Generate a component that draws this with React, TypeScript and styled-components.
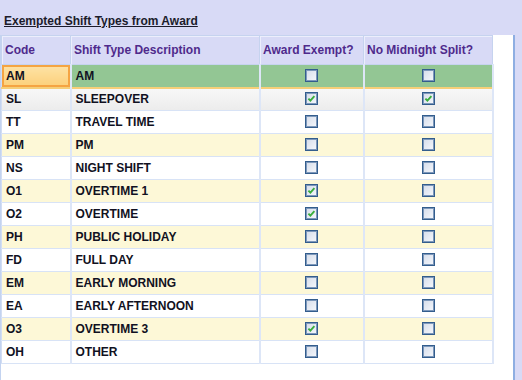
import React from 'react';
import styled, { createGlobalStyle } from 'styled-components';

type Row = { code: string; desc: string; exempt: boolean; split: boolean };

const ROWS: Row[] = [
  { code: 'AM', desc: 'AM', exempt: false, split: false },
  { code: 'SL', desc: 'SLEEPOVER', exempt: true, split: true },
  { code: 'TT', desc: 'TRAVEL TIME', exempt: false, split: false },
  { code: 'PM', desc: 'PM', exempt: false, split: false },
  { code: 'NS', desc: 'NIGHT SHIFT', exempt: false, split: false },
  { code: 'O1', desc: 'OVERTIME 1', exempt: true, split: false },
  { code: 'O2', desc: 'OVERTIME', exempt: true, split: false },
  { code: 'PH', desc: 'PUBLIC HOLIDAY', exempt: false, split: false },
  { code: 'FD', desc: 'FULL DAY', exempt: false, split: false },
  { code: 'EM', desc: 'EARLY MORNING', exempt: false, split: false },
  { code: 'EA', desc: 'EARLY AFTERNOON', exempt: false, split: false },
  { code: 'O3', desc: 'OVERTIME 3', exempt: true, split: false },
  { code: 'OH', desc: 'OTHER', exempt: false, split: false },
];

type RowState = 'selected' | 'hover' | 'odd' | 'even';

const GlobalStyle = createGlobalStyle`
  html, body { margin: 0; padding: 0; }
  body {
    background: #d8daf6;
    font-family: "Liberation Sans", Arial, sans-serif;
    font-size: 12px;
  }
`;

const Panel = styled.div`
  width: 522px;
  height: 380px;
  display: flex;
  flex-direction: column;
  overflow: hidden;
`;

const TitleBar = styled.div`
  height: 35px;
  box-sizing: border-box;
  padding: 14px 0 0 4px;
`;

const Title = styled.span`
  font-weight: bold;
  font-size: 12px;
  color: #1c1c2c;
  text-decoration: underline;
`;

const Content = styled.div`
  width: 515px;
  flex: 1;
  box-sizing: border-box;
  background: #ffffff;
  border-left: 1px solid #c3d3f0;
  border-right: 2px solid #8eaee2;
`;

const Grid = styled.table`
  border-collapse: collapse;
  table-layout: fixed;
  width: 491px;
  border: 1px solid #d2ddf3;
`;

const HeadCell = styled.th`
  height: 29px;
  padding: 0 0 0 3px;
  box-sizing: border-box;
  background: #d8daf6;
  border: 1px solid #c6d3ef;
  box-shadow: inset 1px 1px 0 #eceefc;
  color: #4f2a8c;
  font-weight: bold;
  font-size: 12px;
  text-align: left;
  white-space: nowrap;
`;

const rowBg: Record<RowState, string> = {
  selected: '#93c694',
  hover: 'linear-gradient(#f8f8f8, #ececec)',
  odd: '#ffffff',
  even: '#fdf8d7',
};

const BodyRow = styled.tr<{ $state: RowState }>`
  height: 23px;
  background: ${p => rowBg[p.$state]};
  border-bottom: ${p => (p.$state === 'selected' ? '2px solid #f6cf78' : '1px solid #d8e3f6')};
`;

const Cell = styled.td<{ $center?: boolean; $active?: boolean }>`
  padding: ${p => (p.$center ? '0' : '0 0 0 4px')};
  box-sizing: border-box;
  border-right: 2px solid #dde6f7;
  font-weight: bold;
  font-size: 12px;
  color: #111122;
  text-align: ${p => (p.$center ? 'center' : 'left')};
  vertical-align: middle;
  line-height: 14px;
  ${p =>
    p.$active &&
    `
    background: linear-gradient(#fde3a6, #fccf78);
    box-shadow: inset 0 0 0 2px #f5a442;
  `}
`;

const Box = styled.span`
  display: inline-block;
  width: 13px;
  height: 13px;
  box-sizing: border-box;
  border: 1px solid #335d8d;
  box-shadow: inset 0 0 0 1px #7d98bb;
  background: linear-gradient(135deg, #d4dcea, #f6f8fc);
  vertical-align: middle;
  position: relative;
  top: -1px;
  svg {
    display: block;
  }
`;

const CheckBox = ({ checked }: { checked: boolean }) => (
  <Box>
    {checked && (
      <svg width="11" height="11" viewBox="0 0 11 11">
        <path d="M2.4 5.6 L4.4 7.6 L8.4 3.2" stroke="#3aae3c" strokeWidth="1.9" fill="none" />
      </svg>
    )}
  </Box>
);

const stateFor = (i: number): RowState => {
  if (i === 0) return 'selected';
  if (i === 1) return 'hover';
  return i % 2 === 0 ? 'odd' : 'even';
};

const App = () => (
  <>
    <GlobalStyle />
    <Panel>
      <TitleBar>
        <Title>Exempted Shift Types from Award</Title>
      </TitleBar>
      <Content>
        <Grid>
          <colgroup>
            <col style={{ width: 69 }} />
            <col style={{ width: 189 }} />
            <col style={{ width: 104 }} />
            <col style={{ width: 129 }} />
          </colgroup>
          <thead>
            <tr>
              <HeadCell>Code</HeadCell>
              <HeadCell>Shift Type Description</HeadCell>
              <HeadCell>Award Exempt?</HeadCell>
              <HeadCell>No Midnight Split?</HeadCell>
            </tr>
          </thead>
          <tbody>
            {ROWS.map((r, i) => (
              <BodyRow key={r.code} $state={stateFor(i)}>
                <Cell $active={i === 0}>{r.code}</Cell>
                <Cell>{r.desc}</Cell>
                <Cell $center>
                  <CheckBox checked={r.exempt} />
                </Cell>
                <Cell $center>
                  <CheckBox checked={r.split} />
                </Cell>
              </BodyRow>
            ))}
          </tbody>
        </Grid>
      </Content>
    </Panel>
  </>
);

export default App;
